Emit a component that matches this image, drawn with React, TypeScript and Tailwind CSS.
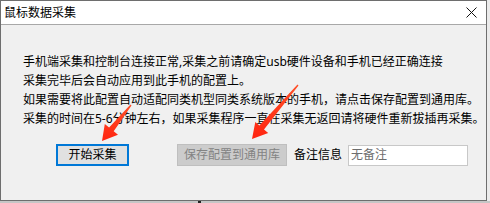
import type { FC } from "react";

const font = { fontFamily: '"Noto Sans", "Noto Sans CJK SC", sans-serif' };

// tapered arrow: thin tail, thick shaft end, triangular head
const arrowPoints = (tx: number, ty: number, hx: number, hy: number) => {
	const dx = hx - tx;
	const dy = hy - ty;
	const len = Math.hypot(dx, dy);
	const ux = dx / len;
	const uy = dy / len;
	const nx = -uy;
	const ny = ux;
	const headLen = 15;
	const headW = 8.5;
	const shaftW = 3;
	const bx = hx - ux * headLen;
	const by = hy - uy * headLen;
	const pts = [
		[tx + nx * 0.6, ty + ny * 0.6],
		[bx + nx * shaftW, by + ny * shaftW],
		[bx + nx * headW, by + ny * headW],
		[hx, hy],
		[bx - nx * headW, by - ny * headW],
		[bx - nx * shaftW, by - ny * shaftW],
		[tx - nx * 0.6, ty - ny * 0.6],
	];
	return pts.map((p) => p.map((v) => v.toFixed(1)).join(",")).join(" ");
};

const Arrows: FC = () => (
	<svg className="absolute left-0 top-0 pointer-events-none" width={490} height={203}>
		<defs>
			<linearGradient id="ar" x1="0" y1="0" x2="0" y2="1">
				<stop offset="0" stopColor="#ff5028" />
				<stop offset="1" stopColor="#ff2410" />
			</linearGradient>
		</defs>
		<polygon points={arrowPoints(131, 105, 102, 141)} fill="url(#ar)" />
		<polygon points={arrowPoints(298, 85, 252, 139)} fill="url(#ar)" />
	</svg>
);

export default function App() {
	return (
		<div className="relative w-[490px] h-[203px] bg-[#ebebeb] overflow-hidden" style={font}>
			<div className="flex flex-col w-[487px] h-[201px] border border-[#6e6e6e] bg-[#f0f0f0]">
				{/* Title bar */}
				<div className="flex items-center justify-between h-[24px] bg-white border-b border-[#a8a8a8] pl-[3px] pr-[9px]">
					<span className="text-[12px] text-black leading-none">鼠标数据采集</span>
					<svg width="11" height="11" viewBox="0 0 11 11">
						<path d="M0.5 0.5 L10.5 10.5 M10.5 0.5 L0.5 10.5" stroke="#111" strokeWidth="1" />
					</svg>
				</div>

				{/* Message */}
				<div className="pt-[27px] pl-[22px] text-[12px] leading-[19px] text-black whitespace-nowrap">
					<p>手机端采集和控制台连接正常,采集之前请确定usb硬件设备和手机已经正确连接</p>
					<p>采集完毕后会自动应用到此手机的配置上。</p>
					<p>如果需要将此配置自动适配同类机型同类系统版本的手机，请点击保存配置到通用库。</p>
					<p>采集的时间在5-6分钟左右，如果采集程序一直在采集无返回请将硬件重新拔插再采集。</p>
				</div>

				{/* Actions */}
				<div className="flex items-center mt-[16px] pl-[55px] text-[12px]">
					<button className="w-[73px] h-[22px] border-2 border-[#0078d7] bg-[#e1e1e1] text-black leading-none">
						开始采集
					</button>
					<button
						disabled
						className="ml-[48px] w-[110px] h-[22px] border border-[#bfbfbf] bg-[#cccccc] text-[#838383] leading-none"
					>
						保存配置到通用库
					</button>
					<span className="ml-[7px] text-black">备注信息</span>
					<div className="ml-[6px] w-[120px] h-[21px] bg-white border border-[#c8c8c8] flex items-center pl-[2px] text-[#6d6d6d]">
						无备注
					</div>
				</div>
			</div>
			<div className="h-[2px] w-[490px] bg-[#c6c6c6]" />
			<div className="absolute left-[198px] top-[201px] w-[3px] h-[2px] bg-[#222]" />
			<Arrows />
		</div>
	);
}
